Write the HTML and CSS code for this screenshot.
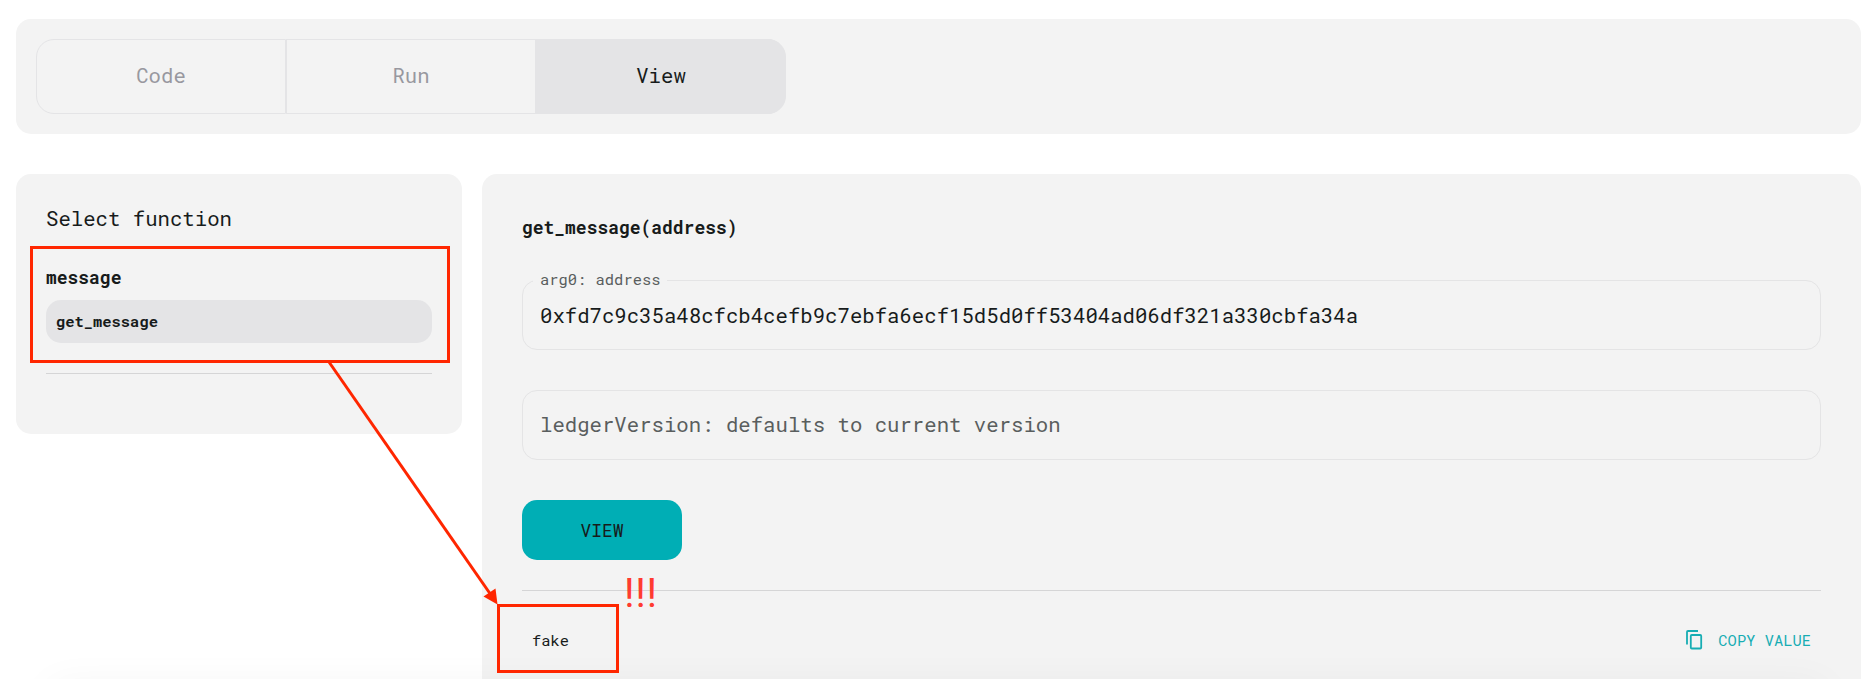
FILE: index.html
```
<!DOCTYPE html>
<html lang="en">
<head>
<meta charset="utf-8">
<title>View function</title>
<link rel="stylesheet" href="styles.css">
</head>
<body>
<main class="page">
  <nav class="tabs-card">
    <div class="tabs">
      <button class="tab">Code</button>
      <button class="tab">Run</button>
      <button class="tab tab-active">View</button>
    </div>
  </nav>
  <div class="columns">
    <aside class="card sidebar">
      <h2 class="sidebar-title">Select function</h2>
      <h3 class="module">message</h3>
      <div class="function">get_message</div>
      <hr class="rule">
    </aside>
    <section class="card panel">
      <h1 class="signature">get_message(address)</h1>
      <div class="field field-filled">
        <span class="label">arg0: address</span>
        <span class="value">0xfd7c9c35a48cfcb4cefb9c7ebfa6ecf15d5d0ff53404ad06df321a330cbfa34a</span>
      </div>
      <div class="field"><span class="value placeholder">ledgerVersion: defaults to current version</span></div>
      <button class="submit">VIEW</button>
      <hr class="rule">
      <div class="result">
        <span class="output">fake</span>
        <button class="copy">
          <svg class="copy-icon" viewBox="0 0 17 20"><path d="M1 14.500V2Q1 1 2 1H12M5.800 5H14.200Q15.200 5 15.200 6V17.500Q15.200 18.500 14.200 18.500H5.800Q4.800 18.500 4.800 17.500V6Q4.800 5 5.800 5Z"/></svg>
          <span>COPY VALUE</span>
        </button>
      </div>
    </section>
  </div>
  <div class="bottom-shadow"></div>
  <svg class="annotations" viewBox="0 0 1875 679">
    <rect x="31.5" y="247.5" width="417" height="114"/>
    <rect x="498.5" y="605.5" width="119" height="66"/>
    <path d="M329 362L491 595"/>
    <path class="head" d="M497.500 604.500L483.500 596.500L495.500 588.500Z"/>
  </svg>
  <div class="marks">!!!</div>
</main>
</body>
</html>
```
FILE: styles.css
```
* { box-sizing: border-box; }
body {
  margin: 0;
  background: #fff;
  color: #171b1b;
  font-family: "Roboto Mono", "Noto Sans Mono", "DejaVu Sans Mono", monospace;
}
h1, h2, h3 { margin: 0; }
button { font: inherit; color: inherit; border: 0; background: none; padding: 0; }
.page { position: relative; height: 679px; padding: 19px 14px 0 16px; overflow: hidden; }
.tabs-card { height: 115px; padding: 20px; border-radius: 15px; background: #f3f3f3; }
.tabs { display: flex; width: 750px; height: 75px; }
.tab { flex: 1; padding-bottom: 3px; border: 1px solid #e4e4e6; color: #98989f; font-size: 20.66px; }
.tab:first-child { border-radius: 18px 0 0 18px; }
.tab-active { border-radius: 0 18px 18px 0; background: #e4e4e6; color: #171b1b; box-shadow: -1px 0 #e4e4e6; }
.columns { display: flex; align-items: flex-start; gap: 20px; margin-top: 40px; }
.card { border-radius: 15px; background: #f3f3f3; }
.sidebar { width: 446px; height: 260px; padding: 30px; }
.sidebar-title { font-weight: 400; font-size: 20.66px; line-height: 29px; }
.module { margin-top: 30px; font-size: 17.97px; font-weight: 700; line-height: 28px; }
.function { height: 43px; margin-top: 9px; padding-left: 10px; border-radius: 15px; background: #e4e4e6; font-size: 15.45px; font-weight: 700; line-height: 42px; }
.rule { height: 1px; margin: 30px 0 0; border: 0; background: #d5d5d6; }
.panel { flex: 1; height: 505px; padding: 40px 40px 0; border-radius: 15px 15px 0 0; }
.signature { font-size: 17.97px; font-weight: 700; line-height: 26px; margin-bottom: 40px; }
.field { position: relative; display: flex; align-items: center; height: 70px; margin-bottom: 40px; padding: 0 17px; border: 1px solid #e4e4e5; border-radius: 15px; }
.value { font-size: 20.66px; white-space: pre; }
.placeholder { color: #5a5e5e; padding-bottom: 2px; }
.label { position: absolute; left: 10px; top: -12px; padding: 0 7px; background: #f3f3f3; color: #5a5e5e; font-size: 15.45px; line-height: 20px; }
.submit { display: block; width: 160px; height: 60px; border-radius: 15px; background: #00aeb5; font-size: 17.97px; }
.result { display: flex; justify-content: space-between; align-items: center; height: 88px; padding: 10px 10px 0; }
.output { font-size: 15.45px; }
.copy { display: flex; align-items: center; gap: 15px; color: #17adb3; font-size: 15.45px; }
.copy-icon { width: 17px; height: 20px; fill: none; stroke: currentColor; stroke-width: 1.8; }
.bottom-shadow { position: absolute; left: 50px; right: 50px; top: 689px; height: 20px; box-shadow: 0 0 40px rgba(0, 0, 0, .07); }
.annotations { position: absolute; left: 0; top: 0; width: 1875px; height: 679px; fill: none; stroke: #ff2600; stroke-width: 3; }
.head { fill: #ff2600; stroke: none; }
.marks { position: absolute; left: 624px; top: 571px; color: #ff3b30; font: 41px/44px "Roboto", sans-serif; letter-spacing: .7px; }
```
